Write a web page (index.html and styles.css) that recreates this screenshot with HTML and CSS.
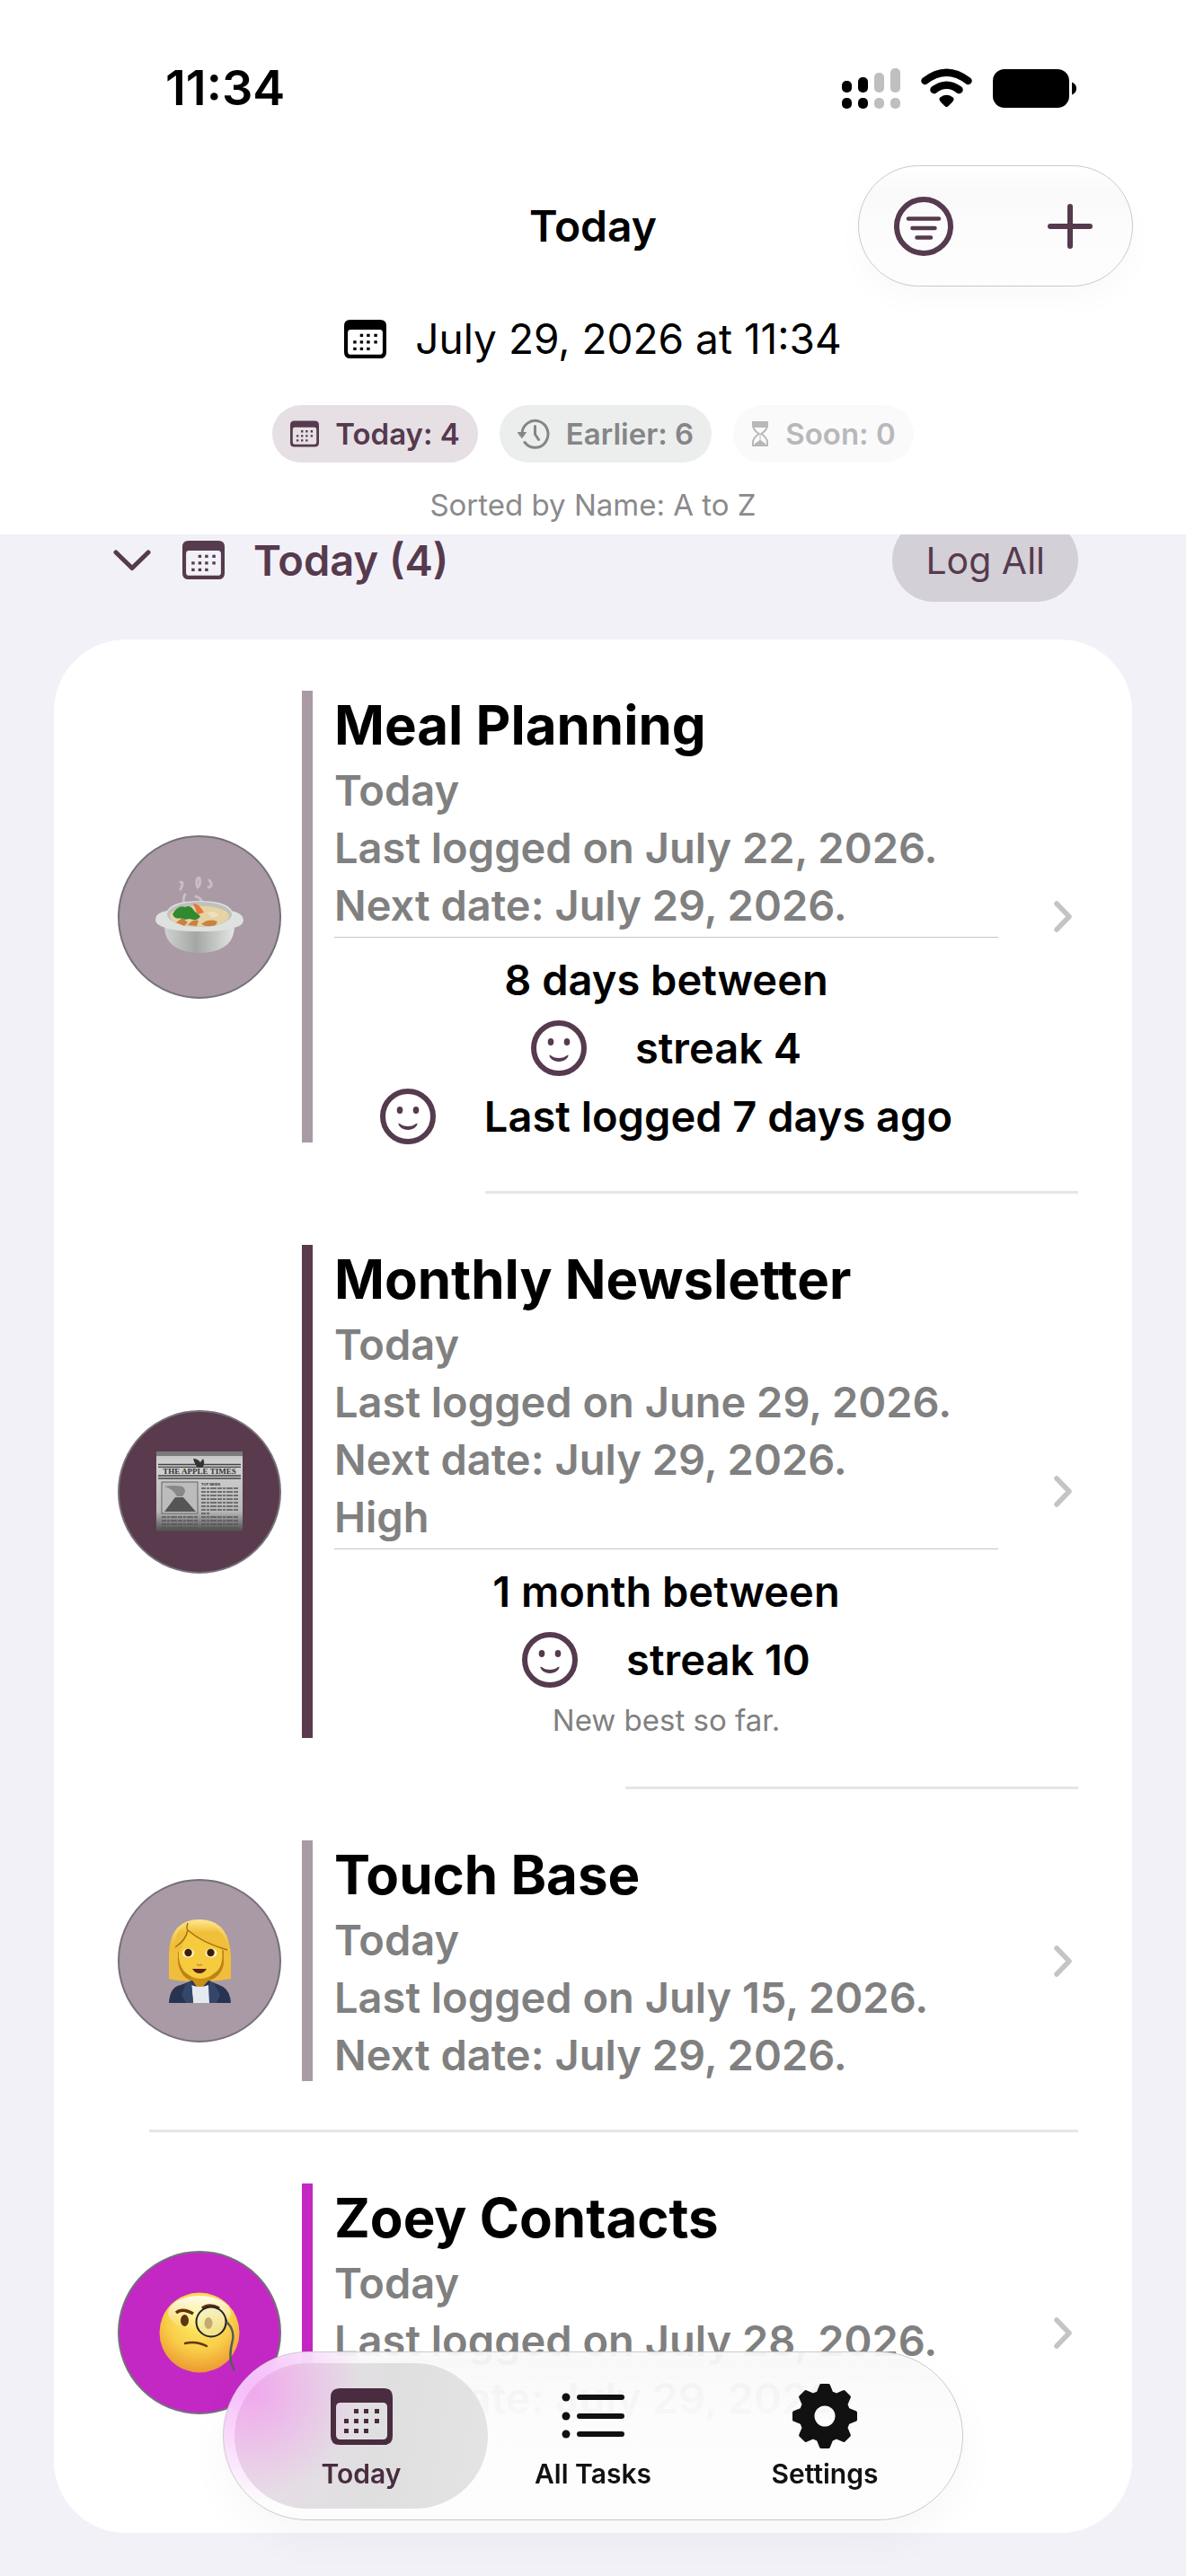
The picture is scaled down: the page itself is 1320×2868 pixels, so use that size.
FILE: index.html
```html
<!DOCTYPE html>
<html lang="en">
<head>
<meta charset="utf-8">
<meta name="viewport" content="width=device-width, initial-scale=1">
<title>Today</title>
<link rel="stylesheet" href="styles.css">
</head>
<body>
<svg class="sprite" aria-hidden="true">
  <symbol id="calendar" viewBox="0 0 69 63">
    <path fill="currentColor" fill-rule="evenodd" d="M10 0H59Q69 0 69 10V53Q69 63 59 63H10Q0 63 0 53V10Q0 0 10 0ZM11 16Q6 16 6 21V52Q6 57 11 57H58Q63 57 63 52V21Q63 16 58 16Z"/>
    <path fill="currentColor" d="M26 23h5v5h-5zM37 23h5v5h-5zM49 23h5v5h-5zM15 34h5v5h-5zM26 34h5v5h-5zM37 34h5v5h-5zM49 34h5v5h-5zM15 45h5v5h-5zM26 45h5v5h-5zM37 45h5v5h-5z"/>
  </symbol>
  <symbol id="face" viewBox="0 0 62 62">
    <circle cx="31" cy="31" r="28" fill="none" stroke="currentColor" stroke-width="6"/>
    <ellipse cx="22" cy="24" rx="3.3" ry="4" fill="currentColor"/>
    <ellipse cx="40" cy="24" rx="3.3" ry="4" fill="currentColor"/>
    <path fill="currentColor" d="M20.500 38.500c1.500 0 4 3.500 10.500 3.500s9-3.500 10.500-3.500c.5 3-4.500 7.500-10.500 7.500s-11-4.500-10.500-7.500z"/>
  </symbol>
  <symbol id="chevron" viewBox="0 0 20 35">
    <path d="M3 3L17 17.500L3 32" fill="none" stroke="currentColor" stroke-width="5.500" stroke-linecap="round" stroke-linejoin="round"/>
  </symbol>
</svg>

<header class="top">
  <div class="status">
    <time>11:34</time>
    <div class="status-icons">
      <svg width="65" height="45" viewBox="0 0 65 45" aria-label="Signal">
        <rect y="14" width="11" height="13" rx="5"/><rect x="18" y="10" width="11" height="17" rx="5"/>
        <rect y="33" width="11" height="12" rx="5"/><rect x="18" y="33" width="11" height="12" rx="5"/>
        <g fill="#bfbfbf"><rect x="36" y="5" width="11" height="22" rx="5"/><rect x="54" width="11" height="27" rx="5"/><rect x="36" y="33" width="11" height="12" rx="5"/><rect x="54" y="33" width="11" height="12" rx="5"/></g>
      </svg>
      <svg width="57" height="44" viewBox="0 0 57 44" aria-label="Wi-Fi">
        <path d="M4.500 14Q28.500-4.500 52.500 14M14.500 24Q28.500 13.500 42.500 24" fill="none" stroke="#000" stroke-width="8.500" stroke-linecap="round"/>
        <path d="M20.500 35Q20 33 22 32Q28.500 27.500 35 32Q37 33 36.500 35Q35.500 37.500 30 42.500Q28.500 43.500 27 42.500Q21.500 37.500 20.500 35Z"/>
      </svg>
      <svg width="94" height="43" viewBox="0 0 94 43" aria-label="Battery">
        <rect width="85" height="43" rx="13"/><path d="M88 14.500Q93 16.500 93 21.500T88 28.500Z"/>
      </svg>
    </div>
  </div>
  <div class="navbar">
    <h1>Today</h1>
    <div class="actions">
      <button type="button" aria-label="Sort and filter">
        <svg width="66" height="66" viewBox="0 0 66 66" fill="none" stroke="currentColor" stroke-linecap="round"><circle cx="33" cy="33" r="30" stroke-width="6"/><path stroke-width="4.500" d="M16 24.500H50M20.500 35H45.500M25.500 45.500H41"/></svg>
      </button>
      <button type="button" aria-label="Add task">
        <svg width="50" height="50" viewBox="0 0 50 50" fill="none" stroke="currentColor" stroke-linecap="round" stroke-width="6"><path d="M25 3V47M3 25H47"/></svg>
      </button>
    </div>
  </div>
  <div class="now"><svg class="cal"><use href="#calendar"/></svg><time>July 29, 2026 at 11:34</time></div>
  <div class="chips">
    <button type="button" class="chip chip-today"><svg width="32" height="30"><use href="#calendar"/></svg>Today: 4</button>
    <button type="button" class="chip chip-earlier">
      <svg width="36" height="34" viewBox="0 0 36 34" fill="none" stroke="currentColor" stroke-width="3" stroke-linecap="round" stroke-linejoin="round"><path d="M5 17A14.500 15 0 1 1 8 26.500M19.500 8.500V17.500L23.500 23.500"/><path fill="currentColor" stroke-width="1" d="M.5 15.500H9.500L5 21.500Z"/></svg>Earlier: 6</button>
    <button type="button" class="chip chip-soon">
      <svg width="20" height="30" viewBox="0 0 20 30" fill="none" stroke="currentColor" stroke-width="2"><path d="M2 2H18V6Q18 10 11.500 15Q18 20 18 24V28H2V24Q2 20 8.500 15Q2 10 2 6Z"/><path fill="currentColor" stroke="none" d="M1 1H19V6L17 8H3L1 6ZM9.500 14H10.500V22L16 26V28H4V26L9.500 22Z"/></svg>Soon: 0</button>
  </div>
  <p class="sorted">Sorted by Name: A to Z</p>
</header>

<main>
  <div class="section-head">
    <button type="button" class="toggle" aria-label="Collapse"><svg width="42" height="24" viewBox="0 0 42 24"><path d="M3 3L21 20.500L39 3" fill="none" stroke="currentColor" stroke-width="5" stroke-linecap="round" stroke-linejoin="round"/></svg></button>
    <svg class="cal"><use href="#calendar"/></svg>
    <h2>Today (4)</h2>
    <button type="button" class="log-all">Log All</button>
  </div>

  <ul class="card">
    <li>
      <a class="task mauve" href="#meal">
        <span class="avatar">
          <svg width="100" height="90" viewBox="0 0 100 90">
            <defs><linearGradient id="bowl" x1="0" x2="1"><stop offset="0" stop-color="#d0d2d0"/><stop offset=".45" stop-color="#a5a7a5"/><stop offset="1" stop-color="#e4e6e4"/></linearGradient></defs>
            <path d="M29 14q4-8 0-8M33 30q-2-6 1-10M48 12q-3-6 1-12q4 7-1 12M46 22q6 2 8 8M60 12q6-2 1-8" fill="none" stroke="#fff" stroke-opacity=".35" stroke-width="3" stroke-linecap="round"/>
            <path fill="url(#bowl)" d="M11 56Q12 84 50 85Q88 84 89 56Z"/>
            <path fill="#dfe1df" d="M1 48Q1 40 14 38Q20 27 50 27T86 38Q99 41 99 49Q98 55 88 57Q76 61 50 61T12 57Q1 54 1 48Z"/>
            <ellipse cx="50" cy="42" rx="36" ry="14" fill="#bfc1ba"/>
            <ellipse cx="50" cy="44" rx="33" ry="11.500" fill="#e6d3a4"/>
            <path fill="#2f8a30" d="M20 42q6-11 14-8q6-3 10 4l7 6q-3 6-12 3q-9 2-10-1q-6 2-9-4z"/>
            <path fill="#e8773a" d="M43 30q6-1 12 10l-7 2z"/>
            <path fill="#f0e0c0" d="M58 40l8 -1l6 4l-8 3z"/>
            <path fill="#c98242" d="M24 51l7-5l6 5l-4 4zM52 53q8-7 18-3l-2 4q-9 3-16-1zM37 54q6-8 12-5l-2 6z"/>
          </svg>
        </span>
        <span class="bar"></span>
        <span class="body">
          <strong>Meal Planning</strong>
          <span class="dates"><span>Today</span><span>Last logged on July 22, 2026.</span><span>Next date: July 29, 2026.</span></span>
          <span class="stats">
            <span class="stat">8 days between</span>
            <span class="stat"><svg class="face"><use href="#face"/></svg>streak 4</span>
            <span class="stat"><svg class="face"><use href="#face"/></svg>Last logged 7 days ago</span>
          </span>
        </span>
        <svg class="chevron"><use href="#chevron"/></svg>
      </a>
      <hr class="rule-stats">
    </li>
    <li>
      <a class="task plum" href="#newsletter">
        <span class="avatar">
          <svg width="96" height="90" viewBox="0 0 96 90">
            <defs><linearGradient id="paper" x2="0" y2="1"><stop offset="0" stop-color="#bdbdbd"/><stop offset=".15" stop-color="#d2d2d2"/><stop offset=".75" stop-color="#b8b8b8"/><stop offset="1" stop-color="#4c4c4c"/></linearGradient></defs>
            <rect width="96" height="89" fill="url(#paper)"/><rect width="96" height="5" fill="#7b7b7b"/>
            <path d="M2 14.500H94M2 17.500H94M2 27H94M2 30H94" stroke="#444" stroke-width="1.300"/>
            <path fill="#333" d="M41 8q5 0 8 4l3-4q2 3 1 7l-2 3h-5q-3-3-5-10z"/>
            <rect x="2" y="18" width="92" height="8" fill="#cecece"/>
            <text x="48" y="25" text-anchor="middle" class="masthead">THE APPLE TIMES</text>
            <rect x="6" y="34" width="40" height="35" fill="#bcbcbc" stroke="#666"/>
            <path fill="#555" d="M9 67L21 51h9l14 16z"/><path fill="#888" d="M9 39q10-2 20 0q6 4 0 11h-6q-4-8-14-11z"/>
            <text x="50" y="38" class="headline">TOP NEWS</text>
            <path d="M50 41H91M50 45H91M50 49H91M50 53H91M50 57H91M50 61H91M50 65H91M50 69H60M6 73H46M6 77H46M6 81H46M6 85H46M50 73H91M50 77H91M50 81H91M50 85H91" stroke="#555" stroke-width="1.500" stroke-dasharray="5 1 3 1 7 1"/>
          </svg>
        </span>
        <span class="bar"></span>
        <span class="body">
          <strong>Monthly Newsletter</strong>
          <span class="dates"><span>Today</span><span>Last logged on June 29, 2026.</span><span>Next date: July 29, 2026.</span><span>High</span></span>
          <span class="stats">
            <span class="stat">1 month between</span>
            <span class="stat"><svg class="face"><use href="#face"/></svg>streak 10</span>
            <small>New best so far.</small>
          </span>
        </span>
        <svg class="chevron"><use href="#chevron"/></svg>
      </a>
      <hr class="rule-streak">
    </li>
    <li>
      <a class="task mauve" href="#touch-base">
        <span class="avatar">
          <svg width="70" height="94" viewBox="0 0 70 94">
            <defs><linearGradient id="hair" x2="0" y2="1"><stop offset="0" stop-color="#ffe48a"/><stop offset=".4" stop-color="#f0c03a"/><stop offset="1" stop-color="#f0bd3c"/></linearGradient></defs>
            <path fill="url(#hair)" d="M1 67V40Q2 1 35 1T70 42V67Q50 71 35 69Q15 71 1 67Z"/>
            <path fill="#a8700c" d="M11 38Q20 25 25 15Q45 20 62 36V50Q60 64 46 69H25Q13 64 11 48Z" opacity=".75"/>
            <path fill="#c98d18" d="M25 60h22v16H25z"/>
            <path fill="#f6cb3e" d="M12 37Q20 24 22 12Q40 24 60 34Q62 52 54 59Q45 67 36 67T18 59Q11 50 12 37Z"/>
            <path fill="url(#hair)" d="M22 5Q40-2 55 11Q66 21 66 35Q35 27 22 11Q20 24 6 33Q8 12 22 5Z"/>
            <path d="M22 5Q20 11 22 13Q38 27 66 35M22 13Q20 24 8 32" fill="none" stroke="#a8700c" stroke-width="1.500"/>
            <ellipse cx="22.500" cy="38.500" rx="6.500" ry="5" fill="#fff4cf"/><ellipse cx="48" cy="38.500" rx="6.500" ry="5" fill="#fff4cf"/>
            <circle cx="22.500" cy="38" r="4.200" fill="#3a2008"/><circle cx="47.500" cy="38" r="4.200" fill="#3a2008"/>
            <path d="M32 51q3 2 6 0" fill="none" stroke="#dc9632" stroke-width="2"/>
            <path fill="#552018" d="M27 56q8 0 16 0q-3 5-8 5t-8-5z"/>
            <path fill="#28344f" d="M1 94Q2 76 14 74L27 69L35 80L45 69L57 74Q69 78 70 94Z"/>
            <path fill="#e5e9f0" d="M26 74q9 4 19 0l1 20H28z"/>
            <path fill="#35466b" d="M20 72l6-3l2 25h-8l-5-9zM51 72l-5-3l0 25h8l4-9z"/>
          </svg>
        </span>
        <span class="bar"></span>
        <span class="body">
          <strong>Touch Base</strong>
          <span class="dates"><span>Today</span><span>Last logged on July 15, 2026.</span><span>Next date: July 29, 2026.</span></span>
        </span>
        <svg class="chevron"><use href="#chevron"/></svg>
      </a>
      <hr class="rule-full">
    </li>
    <li>
      <a class="task magenta task-tall" href="#zoey">
        <span class="avatar">
          <svg width="90" height="90" viewBox="0 0 90 90">
            <defs><radialGradient id="skin" cx=".5" cy=".3" r=".7"><stop offset="0" stop-color="#fff36a"/><stop offset=".6" stop-color="#f9cd48"/><stop offset="1" stop-color="#ec9930"/></radialGradient>
            <linearGradient id="shine" x2="0" y2="1"><stop offset="0" stop-color="#fff" stop-opacity=".9"/><stop offset="1" stop-color="#fff" stop-opacity="0"/></linearGradient></defs>
            <circle cx="45" cy="45" r="44.500" fill="url(#skin)"/><ellipse cx="45" cy="23" rx="35" ry="19" fill="url(#shine)"/>
            <path d="M19 23q7-6 19 1M48 18q8-6 19 0" fill="none" stroke="#62310b" stroke-width="3.500"/>
            <ellipse cx="28.500" cy="31.500" rx="4.500" ry="6.500" fill="#5f3410"/><ellipse cx="55" cy="34.500" rx="4.500" ry="6.500" fill="#9a691d"/>
            <circle cx="58" cy="33" r="16.500" fill="#eeecc4" fill-opacity=".5" stroke="#1e2328" stroke-width="2"/>
            <path d="M74 28q4 5 0 10z" fill="#222"/><path d="M75 33q9 8 7 20q-6 22 2 34" fill="none" stroke="#555b5e" stroke-width="2.500"/>
            <path d="M29 57q12-3 24 3" fill="none" stroke="#65350c" stroke-width="2.500" stroke-linecap="round"/>
          </svg>
        </span>
        <span class="bar"></span>
        <span class="body">
          <strong>Zoey Contacts</strong>
          <span class="dates"><span>Today</span><span>Last logged on July 28, 2026.</span><span>Next date: July 29, 2026.</span></span>
        </span>
        <svg class="chevron"><use href="#chevron"/></svg>
      </a>
    </li>
  </ul>
</main>

<nav class="tabs">
  <a class="tab selected" href="#today" aria-current="page"><svg width="69" height="76" viewBox="0 -7 69 76"><use href="#calendar" width="69" height="63"/></svg>Today</a>
  <a class="tab" href="#all"><svg width="70" height="76" viewBox="0 -12 70 76"><g fill="currentColor"><circle cx="5" cy="5" r="4.500"/><circle cx="5" cy="26" r="4.500"/><circle cx="5" cy="46" r="4.500"/></g><path d="M20 5H67M20 26H67M20 46H67" stroke="currentColor" stroke-width="6" stroke-linecap="round"/></svg>All Tasks</a>
  <a class="tab" href="#settings"><svg width="76" height="76" viewBox="-38 -38 76 76">
    <circle r="20" fill="none" stroke="currentColor" stroke-width="17"/>
    <g fill="currentColor" stroke="currentColor" stroke-width="4" stroke-linejoin="round">
      <path id="tooth" d="M-8-24L-4-34H4L8-24Z"/>
      <use href="#tooth" transform="rotate(45)"/><use href="#tooth" transform="rotate(90)"/><use href="#tooth" transform="rotate(135)"/><use href="#tooth" transform="rotate(180)"/><use href="#tooth" transform="rotate(225)"/><use href="#tooth" transform="rotate(270)"/><use href="#tooth" transform="rotate(315)"/>
    </g></svg>Settings</a>
</nav>
</body>
</html>
```
FILE: styles.css
```css
:root {
  --plum: #563a4e;
  --gray: #808080;
  --small: 33px;
  --text: 47px;
}

* { box-sizing: border-box; }

body {
  margin: 0;
  background: #f2f1f7;
  color: #000;
  font-family: Inter, "Liberation Sans", sans-serif;
  font-size: var(--text);
  line-height: 64px;
}

h1, h2, p, ul { margin: 0; padding: 0; }
ul { list-style: none; }
svg { display: block; flex: none; }
a { color: inherit; text-decoration: none; }
button { border: 0; padding: 0; background: none; color: inherit; font: inherit; }
.sprite { position: absolute; width: 0; height: 0; }
.cal { width: 47px; height: 43px; }

/* Header */
.top {
  position: sticky;
  top: 0;
  z-index: 1;
  padding: 72px 0 11px;
  background: #fff;
}

.status {
  display: flex;
  justify-content: space-between;
  align-items: center;
  height: 52px;
  padding: 0 121px 0 184px;
  font-weight: 600;
}
.status time { font-size: 54px; }
.status-icons { display: flex; align-items: center; gap: 23px; }

.navbar {
  display: grid;
  grid-template-columns: 1fr auto 1fr;
  align-items: center;
  margin-top: 60px;
  padding: 0 59px;
}
.navbar h1 { grid-column: 2; font-size: 48px; font-weight: 600; }
.actions {
  justify-self: end;
  display: flex;
  justify-content: space-between;
  align-items: center;
  width: 306px;
  height: 135px;
  padding: 0 44px 0 39px;
  border: 1px solid #cacaca;
  border-radius: 68px;
  background: linear-gradient(#fff, #f9f9f9 25%, #fcfcfc 50%, #fdfdfd);
  box-shadow: 0 16px 32px rgba(0, 0, 0, .025);
  color: var(--plum);
}

.now {
  display: flex;
  justify-content: center;
  align-items: center;
  gap: 32px;
  margin-top: 27px;
  font-size: 46px;
  line-height: 62px;
}

.chips { display: flex; justify-content: center; gap: 24px; margin-top: 43px; }
.chip {
  display: flex;
  align-items: center;
  gap: 18px;
  height: 64px;
  padding: 0 20px;
  border-radius: 32px;
  font-size: var(--small);
  font-weight: 600;
}
.chip-today { background: #e6e0e5; color: var(--plum); }
.chip-earlier { background: #eceeed; color: #858587; }
.chip-soon { background: #fafafa; color: #b8b8ba; }

.sorted {
  margin-top: 25px;
  color: #8a8a8c;
  font-size: var(--small);
  line-height: 44px;
  text-align: center;
}

/* List */
main { padding: 0 60px 48px; }

.section-head {
  display: flex;
  align-items: center;
  height: 93px;
  margin: -18px 60px 42px 66px;
  color: var(--plum);
}
.section-head .cal { margin: 0 32px 0 35px; }
.section-head h2 { font-size: var(--text); font-weight: 600; }
.log-all {
  height: 93px;
  margin-left: auto;
  padding: 0 37px;
  border-radius: 47px;
  background: #d4d0d7;
  font-size: 41px;
}

.card { border-radius: 80px; background: #fff; }
.card hr { height: 3px; margin: -3px 60px 0 0; border: 0; background: #e6e6e6; }
.card .rule-stats { margin-left: 480px; }
.card .rule-streak { margin-left: 636px; }
.card .rule-full { margin-left: 106px; }

.task {
  display: flex;
  align-items: center;
  padding: 57px 67px 57px 71px;
}
.avatar {
  display: grid;
  place-items: center;
  width: 182px;
  height: 182px;
  border: 2px solid #75707a;
  border-radius: 50%;
  background: var(--tint);
}
.bar { align-self: stretch; width: 12px; margin: 0 24px 0 23px; background: var(--tint); }
.mauve { --tint: #a99aa5; }
.plum { --tint: #5a3a4d; }
.magenta { --tint: #c428c4; }
.masthead { font: bold 9px "Liberation Serif", serif; fill: #333; }
.headline { font: bold 4px "Liberation Sans", sans-serif; fill: #333; }

.body { flex: 1; font-weight: 600; }
.body strong { display: block; padding-bottom: 3px; font-size: 60px; font-weight: 700; line-height: 76px; }
.task-tall .body { min-height: 332px; }
.dates { display: block; margin-bottom: -3px; color: var(--gray); }
.dates span { display: block; }
.stats {
  display: grid;
  justify-items: center;
  gap: 14px;
  margin: 6px 0 -2px;
  padding-top: 16px;
  border-top: 1px solid #c6c6c8;
}
.stat { display: flex; align-items: center; gap: 54px; line-height: 62px; }
.stats small { color: var(--gray); font-size: var(--small); font-weight: 400; line-height: 44px; }
.face { width: 62px; height: 62px; color: var(--plum); }
.chevron { width: 20px; height: 35px; margin-left: 62px; color: #c4c4c6; }

/* Floating tab bar */
.tabs {
  position: fixed;
  bottom: 62px;
  left: 50%;
  z-index: 2;
  display: flex;
  width: 824px;
  height: 188px;
  padding: 12px 24px;
  border: 1px solid #cacaca;
  border-radius: 94px;
  background:
    radial-gradient(circle at 30px 40px, #f6bcfb, rgba(246, 188, 251, 0) 130px),
    linear-gradient(rgba(248, 248, 248, .94), rgba(252, 252, 252, .96) 40%, #fdfdfd);
  box-shadow: 0 20px 48px rgba(0, 0, 0, .035);
  transform: translateX(-50%);
}
.tab {
  display: flex;
  flex: 1;
  flex-direction: column;
  align-items: center;
  gap: 4px;
  margin: 0 -12px;
  padding-top: 21px;
  border-radius: 81px;
  color: #111;
  font-size: 30px;
  font-weight: 600;
  line-height: 44px;
}
.selected {
  background:
    radial-gradient(circle at 20px 30px, #f0a8ec, rgba(232, 200, 230, 0) 120px),
    linear-gradient(100deg, #e9dde9, #dfdfdf 60%, #e4e4e4);
  color: #492c40;
}
```
